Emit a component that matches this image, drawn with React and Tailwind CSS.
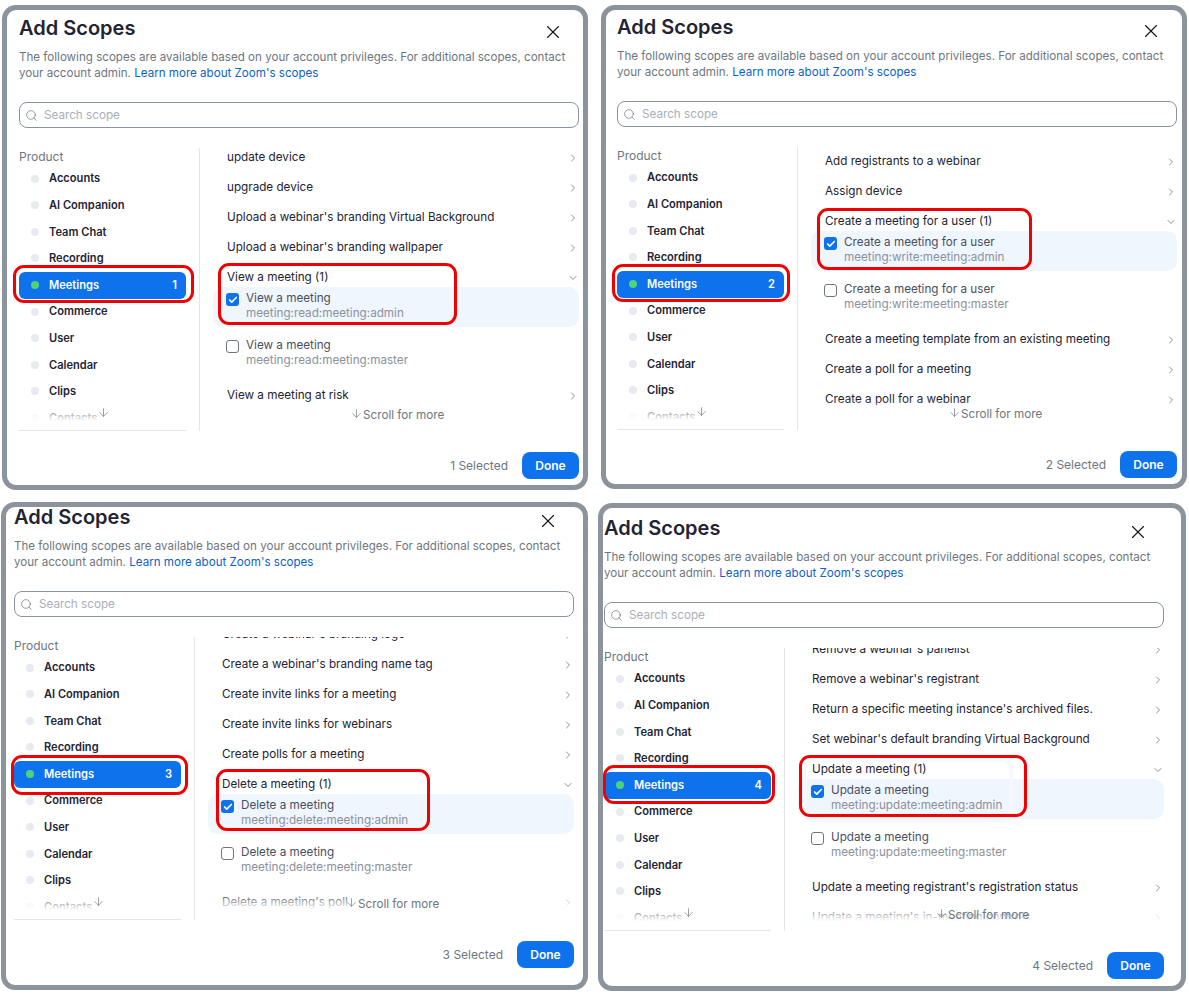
import { ArrowDown, Check, ChevronDown, ChevronRight, Search, X } from 'lucide-react'

const products = ['Accounts', 'AI Companion', 'Team Chat', 'Recording', 'Meetings', 'Commerce', 'User', 'Calendar', 'Clips', 'Contacts']

function ScopeRow({ title }) {
  return (
    <div className="flex h-[30px] items-center justify-between pl-[14px]">
      <span className="whitespace-nowrap">{title}</span>
      <ChevronRight size={12} strokeWidth={1.25} className="text-[#4a4f5e]" />
    </div>
  )
}

function ScopeItem({ title, scope, checked }) {
  return (
    <div className={`flex h-[40px] items-start gap-[7px] rounded-[10px] pl-[13px] pt-[4px] ${checked ? 'bg-[#f0f6fe]' : 'my-[7px]'}`}>
      {checked ? (
        <span className="mt-[2px] flex h-[13px] w-[13px] items-center justify-center rounded-[3px] bg-[#0e72ed]">
          <Check size={10} strokeWidth={4} className="text-white" />
        </span>
      ) : (
        <span className="mt-[2px] h-[13px] w-[13px] rounded-[3px] border border-[#6e7680] bg-white" />
      )}
      <div className="leading-[15px]">
        <div className="text-[#4a4f5e]">{title}</div>
        <div className="text-[#8c919c]">{scope}</div>
      </div>
    </div>
  )
}

function ScopeGroup({ title, count, scope }) {
  return (
    <div>
      <div className="-mb-[6px] flex h-[30px] items-center justify-between pl-[14px]">
        <span>{title} ({count})</span>
        <ChevronDown size={12} strokeWidth={1.25} className="text-[#4a4f5e]" />
      </div>
      <ScopeItem title={title} scope={`${scope}:admin`} checked />
      <ScopeItem title={title} scope={`${scope}:master`} />
    </div>
  )
}

function Panel({ className, count, scrollClass, children, marks }) {
  return (
    <div className={`relative overflow-hidden rounded-[14px] border-[5px] border-[#8b939c] bg-white text-[11.7px] text-[#232333] ${className}`}>
      <div className="flex h-[20px] items-start justify-between">
        <h2 className="text-[20px] font-semibold leading-[20px]">Add Scopes</h2>
        <X size={22} strokeWidth={1.25} className="mr-[15px] mt-[3px] text-[#131619]" />
      </div>

      <p className="mt-[11px] whitespace-nowrap text-[11.6px] leading-[16px] text-[#6e7680]">
        The following scopes are available based on your account privileges. For additional scopes, contact<br />
        your account admin. <a className="text-[#0e5fc7]">Learn more about Zoom's scopes</a>
      </p>

      <div className="mt-[21px] flex h-[26px] items-center gap-[6px] rounded-[8px] border border-[#8a93a4] pl-[5px] text-[#aab0b8]">
        <Search size={13} strokeWidth={1} className="text-[#4a4f5e]" />
        <span className="pt-[1px]">Search scope</span>
      </div>

      <div className="mt-[20px] flex h-[283px]">
        <div className="w-[181px] shrink-0 border-r border-[#e4e6ea] pr-[13px]">
          <div className="h-[283px] border-b border-[#e4e6ea]">
            <div className="relative h-[273px] overflow-hidden">
              <div className="h-[17.4px] text-[12px] leading-[17px] text-[#6e7680]">Product</div>
              {products.map((name) => (
                <div key={name} className="flex h-[26.6px] items-center">
                  <div className={`flex h-[27px] w-full items-center gap-[10px] rounded-[6px] pl-[12px] pr-[9px] text-[11.1px] font-semibold ${name === 'Meetings' ? 'bg-[#0e72ed] text-white' : ''}`}>
                    <span className={`h-[8px] w-[8px] rounded-full ${name === 'Meetings' ? 'bg-[#4fd27a]' : 'bg-[#e8eaf2]'}`} />
                    <span className="flex-1">{name}</span>
                    {name === 'Meetings' && <span>{count}</span>}
                  </div>
                </div>
              ))}
              <div className="absolute inset-x-0 bottom-0 h-[20px] bg-gradient-to-b from-white/0 to-white" />
              <ArrowDown size={13} strokeWidth={1} className="absolute bottom-[2px] left-[78px] text-[#4a4f5e]" />
            </div>
          </div>
        </div>

        <div className="relative ml-[13px] h-[273px] flex-1 overflow-hidden">
          <div className={scrollClass}>{children}</div>
          <div className="absolute inset-x-0 bottom-0 h-[20px] bg-gradient-to-b from-white/0 to-white" />
          <div className="absolute bottom-0 left-[137px] flex items-center leading-[12px] text-[#6e7680]">
            <ArrowDown size={13} strokeWidth={1} className="-mt-[3px] text-[#4a4f5e]" />
            <span>Scroll for more</span>
          </div>
        </div>
      </div>

      <div className="mt-[21px] flex items-center justify-end gap-[14px] text-[12px]">
        <span className="text-[#6e7680]">{count} Selected</span>
        <button className="h-[27px] w-[57px] rounded-[8px] bg-[#0e72ed] font-semibold text-white">Done</button>
      </div>

      {marks}
    </div>
  )
}

export default function App() {
  return (
    <div className="grid h-[994px] w-[1189px] grid-cols-[598px_591px] content-start items-start overflow-hidden bg-white [font-family:Inter,sans-serif]">
      <Panel
        className="ml-[2px] mt-[5px] w-[586px] pb-[6px] pl-[12px] pr-[4px] pt-[8px]"
        count={1}
        scrollClass="-mt-[5px]"
        marks={
          <>
            <div className="absolute left-[6px] top-[255px] h-[38px] w-[181px] rounded-[11px] border-[3px] border-[#f00000]" />
            <div className="absolute left-[211px] top-[253px] h-[62px] w-[239px] rounded-[11px] border-[3px] border-[#f00000]" />
          </>
        }
      >
        <ScopeRow title="update device" />
        <ScopeRow title="upgrade device" />
        <ScopeRow title="Upload a webinar's branding Virtual Background" />
        <ScopeRow title="Upload a webinar's branding wallpaper" />
        <ScopeGroup title="View a meeting" count={1} scope="meeting:read:meeting" />
        <ScopeRow title="View a meeting at risk" />
      </Panel>

      <Panel
        className="ml-[3px] mt-[5px] w-[586px] pb-[6px] pl-[11px] pr-[5px] pt-[7px]"
        count={2}
        scrollClass="mt-0"
        marks={
          <>
            <div className="absolute left-[6px] top-[254px] h-[38px] w-[178px] rounded-[11px] border-[3px] border-[#f00000]" />
            <div className="absolute left-[211px] top-[198px] h-[62px] w-[215px] rounded-[11px] border-[3px] border-[#f00000]" />
          </>
        }
      >
        <ScopeRow title="Add registrants to a webinar" />
        <ScopeRow title="Assign device" />
        <ScopeGroup title="Create a meeting for a user" count={1} scope="meeting:write:meeting" />
        <ScopeRow title="Create a meeting template from an existing meeting" />
        <ScopeRow title="Create a poll for a meeting" />
        <ScopeRow title="Create a poll for a webinar" />
      </Panel>

      <Panel
        className="ml-[1px] mt-[12px] w-[587px] pb-[17px] pl-[8px] pr-[9px]"
        count={3}
        scrollClass="-mt-[17px]"
        marks={
          <>
            <div className="absolute left-[5px] top-[248px] h-[40px] w-[177px] rounded-[11px] border-[3px] border-[#f00000]" />
            <div className="absolute left-[210px] top-[262px] h-[62px] w-[214px] rounded-[11px] border-[3px] border-[#f00000]" />
          </>
        }
      >
        <ScopeRow title="Create a webinar's branding logo" />
        <ScopeRow title="Create a webinar's branding name tag" />
        <ScopeRow title="Create invite links for a meeting" />
        <ScopeRow title="Create invite links for webinars" />
        <ScopeRow title="Create polls for a meeting" />
        <ScopeGroup title="Delete a meeting" count={1} scope="meeting:delete:meeting" />
        <ScopeRow title="Delete a meeting's poll" />
      </Panel>

      <Panel
        className="mt-[13px] w-[588px] pb-[7px] pl-[1px] pr-[17px] pt-[10px]"
        count={4}
        scrollClass="-mt-[13px]"
        marks={
          <>
            <div className="absolute left-[0px] top-[257px] h-[39px] w-[172px] rounded-[11px] border-[3px] border-[#f00000]" />
            <div className="absolute left-[200px] top-[250px] h-[64px] w-[210px] rounded-[10px] border-[4px] border-[#f5f9fe]" />
            <div className="absolute left-[196px] top-[247px] h-[62px] w-[228px] rounded-[11px] border-[3px] border-[#f00000]" />
          </>
        }
      >
        <ScopeRow title="Remove a webinar's panelist" />
        <ScopeRow title="Remove a webinar's registrant" />
        <ScopeRow title="Return a specific meeting instance's archived files." />
        <ScopeRow title="Set webinar's default branding Virtual Background" />
        <ScopeGroup title="Update a meeting" count={1} scope="meeting:update:meeting" />
        <ScopeRow title="Update a meeting registrant's registration status" />
        <ScopeRow title="Update a meeting's in-meeting controls" />
      </Panel>
    </div>
  )
}
